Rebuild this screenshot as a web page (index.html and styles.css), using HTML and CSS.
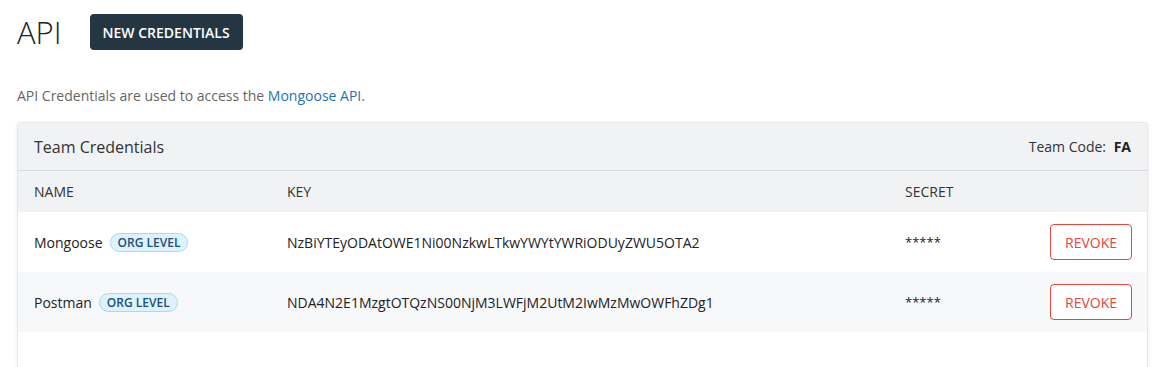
FILE: index.html
```html
<!DOCTYPE html>
<html lang="en">
<head>
    <meta charset="UTF-8">
    <meta name="viewport" content="width=device-width, initial-scale=1.0">
    <title>API</title>
    <link rel="stylesheet" href="styles.css">
</head>
<body>
    <div class="page">
        <div class="page-header">
            <h1>API</h1>
            <button type="button" class="btn-dark">NEW CREDENTIALS</button>
        </div>

        <p class="intro">API Credentials are used to access the <a href="#">Mongoose API</a>.</p>

        <div class="card">
            <div class="card-header">
                <span class="card-title">Team Credentials</span>
                <span class="team-code">Team Code: <b>FA</b></span>
            </div>
            <div class="row head">
                <div>NAME</div>
                <div>KEY</div>
                <div>SECRET</div>
                <div></div>
            </div>
            <div class="row">
                <div class="name">Mongoose <span class="badge">ORG LEVEL</span></div>
                <div>NzBiYTEyODAtOWE1Ni00NzkwLTkwYWYtYWRiODUyZWU5OTA2</div>
                <div class="secret">*****</div>
                <div><button type="button" class="btn-revoke">REVOKE</button></div>
            </div>
            <div class="row alt">
                <div class="name">Postman <span class="badge">ORG LEVEL</span></div>
                <div>NDA4N2E1MzgtOTQzNS00NjM3LWFjM2UtM2IwMzMwOWFhZDg1</div>
                <div class="secret">*****</div>
                <div><button type="button" class="btn-revoke">REVOKE</button></div>
            </div>
            <div class="card-empty"></div>
        </div>
    </div>
</body>
</html>
```

FILE: styles.css
```css
body {
    margin: 0;
    font-family: "Open Sans", Arial, sans-serif;
    color: #222;
    background: #fff;
}
.page {
    padding: 14px 17px 0;
}
.page-header {
    display: flex;
    align-items: center;
    gap: 28px;
}
h1 {
    margin: 0;
    font-size: 31px;
    font-weight: 300;
    line-height: 36px;
    color: #222;
}
.btn-dark {
    height: 36px;
    padding: 0 13px;
    background-color: #243642;
    color: #fff;
    border: none;
    border-radius: 4px;
    font-family: inherit;
    font-size: 14px;
    font-weight: 600;
    cursor: pointer;
}
.intro {
    margin: 36px 0 16px;
    font-size: 14px;
    line-height: 20px;
    color: #666;
}
.intro a {
    color: #1f72b0;
    text-decoration: none;
}
.card {
    border: 1px solid #e6e7ea;
    border-bottom: none;
    border-radius: 4px 4px 0 0;
    box-shadow: 0 1px 4px rgba(0, 0, 0, 0.08);
}
.card-header {
    display: flex;
    justify-content: space-between;
    align-items: center;
    height: 47px;
    padding: 0 16px;
    background: #f1f2f4;
    border-bottom: 1px solid #d9dadd;
}
.card-title {
    font-size: 16px;
    color: #333;
}
.team-code {
    font-size: 14px;
    color: #333;
}
.team-code b {
    margin-left: 4px;
    font-weight: 700;
    color: #222;
}
.row {
    display: grid;
    grid-template-columns: 253px 618px 1fr auto;
    align-items: center;
    height: 60px;
    padding: 0 15px 0 16px;
    font-size: 14px;
    color: #222;
}
.row.head {
    height: 41px;
    background: #f1f2f4;
    color: #333;
}
.row.alt {
    background: #f7f8fa;
}
.name {
    display: flex;
    align-items: center;
    gap: 7px;
}
.badge {
    display: inline-block;
    height: 17px;
    line-height: 17px;
    padding: 0 7px;
    background: #def2fc;
    border: 1px solid #a8d8f2;
    border-radius: 10px;
    font-size: 12px;
    font-weight: 600;
    color: #1d4f78;
}
.secret {
    font-size: 13px;
}
.btn-revoke {
    width: 82px;
    height: 36px;
    background: #fff;
    border: 1px solid #e8453c;
    border-radius: 4px;
    color: #e8453c;
    font-family: inherit;
    font-size: 14px;
    cursor: pointer;
}
.card-empty {
    height: 40px;
}
```
